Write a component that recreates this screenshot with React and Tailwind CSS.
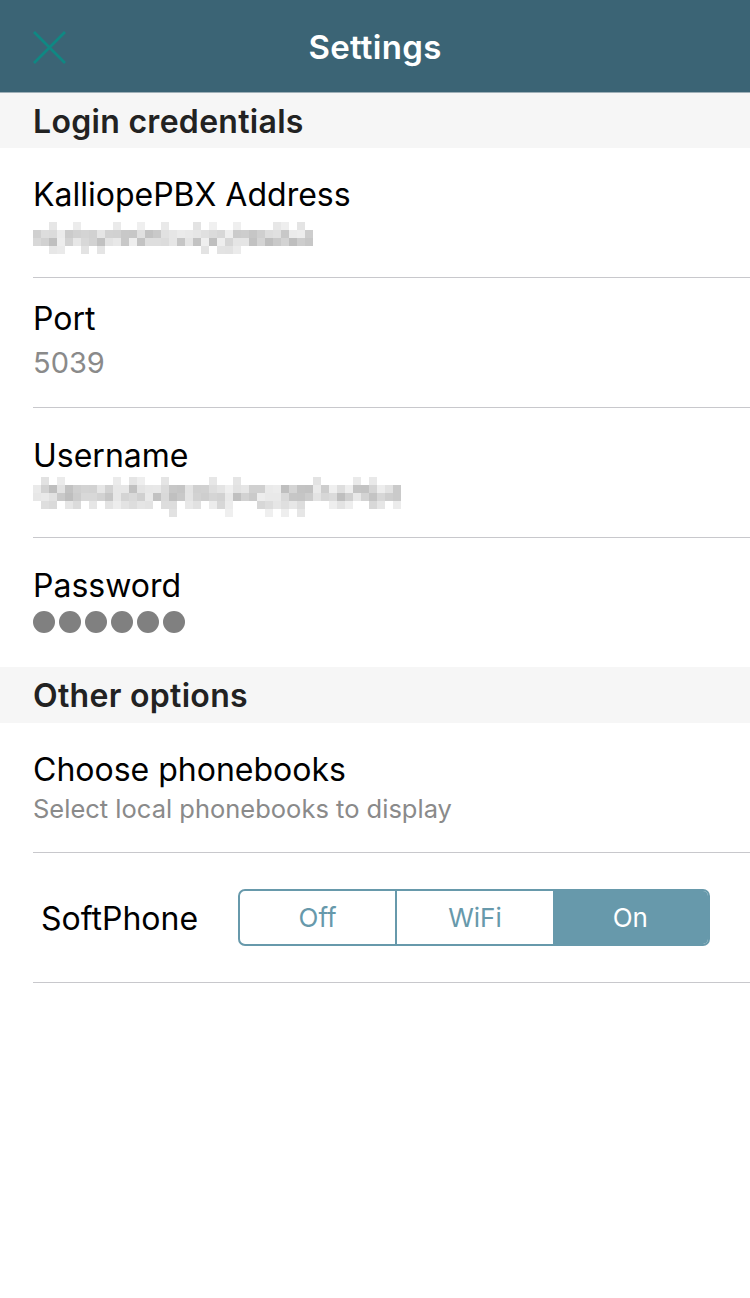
import React from "react";

function rand(seed) {
  let s = seed;
  return () => {
    s = (s * 9301 + 49297) % 233280;
    return s / 233280;
  };
}

function Pixelated({ width, rows, seed, block = 8 }) {
  const r = rand(seed);
  const cols = Math.floor(width / block);
  const rects = [];
  rows.forEach((kind, ri) => {
    for (let c = 0; c < cols; c++) {
      const v = r();
      let g;
      if (kind === "dense") g = 190 + Math.floor(v * 50);
      else if (kind === "mid") g = v < 0.6 ? 215 + Math.floor(v * 40) : 250;
      else g = v < 0.2 ? 225 + Math.floor(v * 80) : 255;
      if (g >= 250) continue;
      rects.push(
        <rect key={ri + "-" + c} x={c * block} y={ri * block} width={block} height={block} fill={`rgb(${g},${g},${g})`} />
      );
    }
  });
  return (
    <svg width={cols * block} height={rows.length * block} className="block">
      {rects}
    </svg>
  );
}

const font = { fontFamily: "Inter, 'Noto Sans', sans-serif" };

export default function App() {
  return (
    <div className="w-[750px] h-[1298px] bg-white" style={font}>
      <div className="h-[93px] bg-[#3b6475] border-b border-[#9fb0b8] relative flex items-center justify-center">
        <svg className="absolute left-[31px] top-[29px]" width="36" height="36" viewBox="0 0 36 36">
          <path d="M3 3 L34 34 M34 3 L3 34" stroke="#0f8883" strokeWidth="2.8" fill="none" />
        </svg>
        <span className="text-white text-[33px] font-semibold tracking-[0.3px] mt-[4px]">Settings</span>
      </div>
      <div className="h-[55px] bg-[#f6f6f6] pl-[33px] flex items-center">
        <span className="text-[32px] leading-[36px] font-semibold text-[#222] tracking-[0.3px] mt-[2px]">Login credentials</span>
      </div>
      <div className="h-[130px] ml-[33px] border-b border-[#c8c8cc] pt-[29px]">
        <div className="text-[32px] leading-[36px] text-black">KalliopePBX Address</div>
        <div className="mt-[9px]">
          <Pixelated width={280} rows={["sparse", "dense", "dense", "sparse"]} seed={17} block={8} />
        </div>
      </div>
      <div className="h-[130px] ml-[33px] border-b border-[#c8c8cc] pt-[23px]">
        <div className="text-[32px] leading-[36px] text-black">Port</div>
        <div className="mt-[10px] text-[29px] leading-[32px] text-[#8a8a8a]">5039</div>
      </div>
      <div className="h-[130px] ml-[33px] border-b border-[#c8c8cc] pt-[30px]">
        <div className="text-[32px] leading-[36px] text-black">Username</div>
        <div className="mt-[3px]">
          <Pixelated width={368} rows={["sparse", "dense", "dense", "mid", "sparse"]} seed={53} block={8} />
        </div>
      </div>
      <div className="h-[129px] ml-[33px] pt-[30px]">
        <div className="text-[32px] leading-[36px] text-black">Password</div>
        <div className="mt-[7px] flex gap-[4px]">
          {[0, 1, 2, 3, 4, 5].map((i) => (
            <div key={i} className="w-[22px] h-[22px] rounded-full bg-[#808080]" />
          ))}
        </div>
      </div>
      <div className="h-[56px] bg-[#f6f6f6] pl-[33px] flex items-center">
        <span className="text-[32px] leading-[36px] font-semibold text-[#222] tracking-[0.3px] mt-[2px]">Other options</span>
      </div>
      <div className="h-[130px] ml-[33px] border-b border-[#c8c8cc] pt-[29px]">
        <div className="text-[32px] leading-[36px] text-black">Choose phonebooks</div>
        <div className="mt-[7px] text-[25.5px] leading-[28px] text-[#8a8a8a]">Select local phonebooks to display</div>
      </div>
      <div className="h-[130px] ml-[33px] border-b border-[#c8c8cc] flex items-center">
        <span className="ml-[8px] text-[32px] text-black w-[197px] mt-[2px]">SoftPhone</span>
        <div className="flex w-[472px] h-[57px] border-2 border-[#6799ab] rounded-[7px] overflow-hidden text-[26px]">
          <div className="flex-1 flex items-center justify-center text-[#6799ab] border-r-2 border-[#6799ab]">Off</div>
          <div className="flex-1 flex items-center justify-center text-[#6799ab]">WiFi</div>
          <div className="flex-1 flex items-center justify-center text-white bg-[#6799ab]">On</div>
        </div>
      </div>
    </div>
  );
}
